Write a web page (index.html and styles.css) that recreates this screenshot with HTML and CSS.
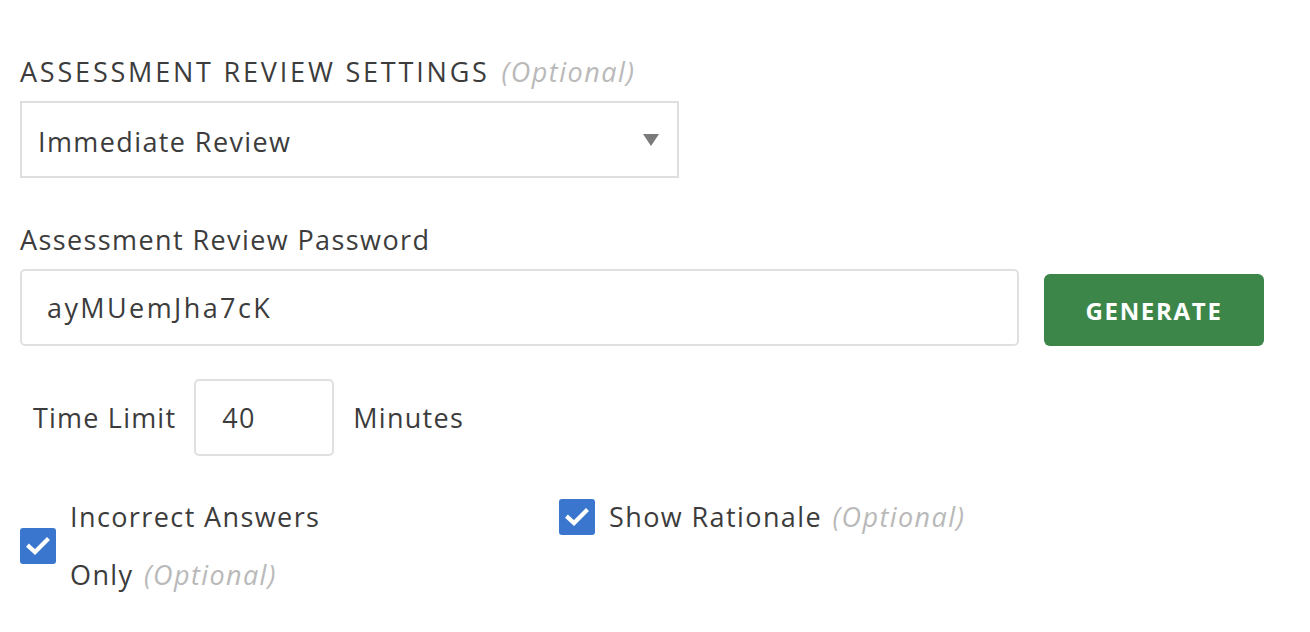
FILE: index.html
```html
<!DOCTYPE html>
<html>
<head>
<meta charset="utf-8">
<link rel="stylesheet" href="styles.css">
</head>
<body>
<div class="form">
  <div class="field">
    <div class="label upper"><span>ASSESSMENT REVIEW SETTINGS</span> <span class="opt">(Optional)</span></div>
    <div class="select">
      <span class="seltext">Immediate Review</span>
      <span class="arrow"></span>
    </div>
  </div>
  <div class="field pw">
    <div class="label">Assessment Review Password</div>
    <div class="pwrow">
      <div class="input pwinput">ayMUemJha7cK</div>
      <button class="btn">GENERATE</button>
    </div>
  </div>
  <div class="timerow">
    <span class="tl">Time Limit</span>
    <div class="input timeinput">40</div>
    <span class="min">Minutes</span>
  </div>
  <div class="checks">
    <div class="check c1">
      <span class="box"><svg viewBox="0 0 36 36" width="36" height="36"><path d="M9 18.5 L15 24 L27 12" fill="none" stroke="#fff" stroke-width="4.2" stroke-linecap="square" stroke-linejoin="miter"/></svg></span>
      <div class="ctext">
        <div class="line">Incorrect Answers</div>
        <div class="line"><span>Only</span> <span class="opt">(Optional)</span></div>
      </div>
    </div>
    <div class="check c2">
      <span class="box"><svg viewBox="0 0 36 36" width="36" height="36"><path d="M9 18.5 L15 24 L27 12" fill="none" stroke="#fff" stroke-width="4.2" stroke-linecap="square" stroke-linejoin="miter"/></svg></span>
      <div class="ctext"><span>Show Rationale</span> <span class="opt">(Optional)</span></div>
    </div>
  </div>
</div>
</body>
</html>
```
FILE: styles.css
```css
* { box-sizing: border-box; }
html, body { margin: 0; padding: 0; background: #fff; }
body {
  font-family: "Open Sans", "Lato", sans-serif;
  color: #3c3c3c;
  font-size: 27px;
  letter-spacing: 1.4px;
}
.form { padding: 55px 0 0 20px; width: 1264px; }
.label { line-height: 34px; margin-bottom: 12px; }
.upper { letter-spacing: 2.8px; }
.upper .opt { letter-spacing: 1.5px; }
.opt { color: #b9b9b9; font-style: italic; margin-left: 2px; }
.select {
  width: 659px; height: 77px;
  border: 2px solid #dedede;
  display: flex; align-items: center; justify-content: space-between;
  padding: 0 18px 0 16px;
}
.seltext { padding-top: 3px; }
.arrow {
  width: 0; height: 0;
  border-left: 8px solid transparent;
  border-right: 8px solid transparent;
  border-top: 12px solid #7a7a7a;
}
.pw { margin-top: 45px; }
.pwrow { display: flex; align-items: flex-end; gap: 25px; }
.input {
  border: 2px solid #e0e0e0;
  border-radius: 5px;
  height: 77px;
  display: flex; align-items: center;
}
.pwinput { width: 999px; padding-left: 25px; letter-spacing: 2.4px; }
.btn {
  width: 220px; height: 72px;
  background: #3d864a;
  border: none; border-radius: 6px;
  color: #fff; font-family: inherit; font-weight: 700;
  font-size: 24px; letter-spacing: 1.7px;
}
.timerow { display: flex; align-items: center; margin-top: 33px; padding-left: 13px; }
.tl { letter-spacing: 1.2px; }
.timeinput { width: 140px; padding-left: 26px; margin: 0 19px 0 18px; }
.min { letter-spacing: 1.3px; }
.checks { display: flex; align-items: flex-start; margin-top: 32px; }
.check { display: flex; }
.c1 { width: 539px; align-items: center; }
.c1 .line { line-height: 58px; white-space: nowrap; }
.c2 { align-items: flex-start; margin-top: 11px; }
.c2 .ctext { line-height: 36px; }
.box {
  width: 36px; height: 36px; border-radius: 3px;
  background: #3a76ce; flex: none; margin-right: 14px;
  display: block;
}
.box svg { display: block; }
```
